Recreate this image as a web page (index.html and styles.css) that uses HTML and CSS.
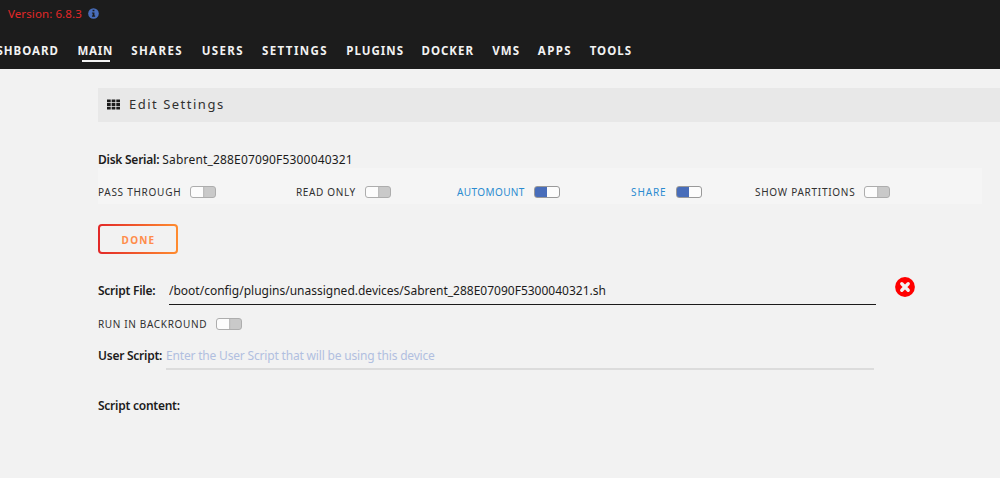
FILE: index.html
```html
<!DOCTYPE html>
<html lang="en">
<head>
    <meta charset="UTF-8">
    <meta name="viewport" content="width=device-width, initial-scale=1.0">
    <title>Edit Settings</title>
    <link rel="stylesheet" href="styles.css">
</head>
<body>
    <header>
        <div class="version">
            <span>Version: 6.8.3</span>
            <svg class="info" viewBox="0 0 12 12">
                <circle cx="6" cy="6" r="5.8" fill="#486dba"/>
                <path d="M5 2h2v1.6H5zM4.3 4.8H7v3.4h.8v1.3H4.3V8.2h.8V6h-.8z" fill="#1c1c1c"/>
            </svg>
        </div>
        <nav>
            <a href="#">DASHBOARD</a>
            <a class="active" href="#">MAIN</a>
            <a class="wide" href="#">SHARES</a>
            <a class="wide" href="#">USERS</a>
            <a class="wide" href="#">SETTINGS</a>
            <a href="#">PLUGINS</a>
            <a href="#">DOCKER</a>
            <a href="#">VMS</a>
            <a class="wide" href="#">APPS</a>
            <a href="#">TOOLS</a>
        </nav>
    </header>

    <main>
        <div class="title">
            <svg class="grid-icon" viewBox="0 0 14 11">
                <path d="M0 0h4v3H0zM5 0h4v3H5zM10 0h4v3h-4zM0 4h4v3H0zM5 4h4v3H5zM10 4h4v3h-4zM0 8h4v3H0zM5 8h4v3H5zM10 8h4v3h-4z" fill="#1c1c1c"/>
            </svg>
            <span>Edit Settings</span>
        </div>

        <p class="serial"><b>Disk Serial:</b> <span>Sabrent_288E07090F5300040321</span></p>

        <!-- Device switches -->
        <div class="switches">
            <div class="option wide"><span>PASS THROUGH</span><i class="switch"></i></div>
            <div class="option"><span>READ ONLY</span><i class="switch"></i></div>
            <div class="option tight on"><span>AUTOMOUNT</span><i class="switch"></i></div>
            <div class="option wider on"><span>SHARE</span><i class="switch"></i></div>
            <div class="option wide"><span>SHOW PARTITIONS</span><i class="switch"></i></div>
        </div>

        <button class="done" type="button">DONE</button>

        <!-- Script form -->
        <div class="field file">
            <label for="scriptFile">Script File:</label>
            <input type="text" id="scriptFile" value="/boot/config/plugins/unassigned.devices/Sabrent_288E07090F5300040321.sh">
            <svg class="remove" viewBox="0 0 20 20">
                <circle cx="10" cy="10" r="9.9" fill="#f00"/>
                <path d="M6.8 6.8l6.4 6.4M13.2 6.8l-6.4 6.4" stroke="#f2f2f2" stroke-width="3.4" stroke-linecap="round"/>
            </svg>
        </div>

        <div class="option background"><span>RUN IN BACKROUND</span><i class="switch"></i></div>

        <div class="field user">
            <label for="userScript">User Script:</label>
            <input type="text" id="userScript" placeholder="Enter the User Script that will be using this device">
        </div>

        <p class="content">Script content:</p>
    </main>
</body>
</html>
```

FILE: styles.css
```css
* {
    box-sizing: border-box;
}

body {
    margin: 0;
    height: 478px;
    overflow: hidden;
    background-color: #f2f2f2;
    color: #1c1b1b;
    font-family: "Noto Sans", sans-serif;
    font-size: 12px;
}

header {
    height: 69px;
    background-color: #1c1c1c;
}

.version {
    display: flex;
    align-items: center;
    gap: 6px;
    height: 26px;
    padding-left: 8px;
    color: #e22828;
    font-size: 11.5px;
    letter-spacing: 0.1px;
}

.info {
    width: 11px;
    height: 11px;
}

nav {
    display: grid;
    grid-template-columns: 58px 54px 70px 61px 84px 76px 70px 46px 52px 60px;
    height: 43px;
}

nav a {
    position: relative;
    justify-self: end;
    height: 38px;
    line-height: 49px;
    color: #f2f2f2;
    font-size: 11.5px;
    font-weight: bold;
    letter-spacing: 1px;
    margin-right: -1px;
    text-decoration: none;
    white-space: nowrap;
}

nav .wide {
    letter-spacing: 1.4px;
}

nav .active {
    letter-spacing: 0.7px;
}

nav .active::after {
    content: "";
    position: absolute;
    left: 4px;
    right: 3px;
    bottom: 2px;
    height: 2px;
    background-color: #f2f2f2;
}

main {
    padding: 19px 0 0 98px;
}

.title {
    display: flex;
    align-items: center;
    gap: 9px;
    height: 34px;
    padding: 0 0 2px 9px;
    background-color: #e8e8e8;
    color: #303030;
    font-size: 13px;
    letter-spacing: 1.5px;
}

.grid-icon {
    width: 13px;
    height: 11px;
}

p {
    margin: 0;
}

b, label, .content {
    font-weight: 600;
    letter-spacing: -0.25px;
}

.serial {
    height: 46px;
    padding-top: 28px;
    line-height: 20px;
}

.serial span {
    letter-spacing: 0.17px;
}

.switches {
    display: grid;
    grid-template-columns: 198px 161px 174px 124px 1fr;
    align-items: center;
    width: 884px;
    height: 36px;
    padding-top: 12px;
    background-color: #f5f5f5;
}

.option {
    display: flex;
    align-items: center;
    gap: 9px;
    color: #303030;
    font-size: 10px;
    letter-spacing: 0.65px;
    white-space: nowrap;
}

.option.wide {
    letter-spacing: 0.73px;
}

.option.wider {
    letter-spacing: 0.9px;
}

.option.tight {
    letter-spacing: 0.4px;
}

.on {
    color: #2b8bd0;
}

.switch {
    width: 26px;
    height: 12px;
    border: 1px solid #adadad;
    border-radius: 3px;
    background: linear-gradient(to right, #fcfcfc 12px, #b9b9b9 12px, #c9c9c9 14px);
}

.on .switch {
    border-color: #999;
    background: linear-gradient(to right, #486dba 12px, #fcfcfc 12px);
}

.done {
    display: block;
    width: 80px;
    height: 30px;
    margin-top: 20px;
    padding: 2px 6px 0 7px;
    border: 2px solid transparent;
    border-radius: 4px;
    background: linear-gradient(#f2f2f2, #f2f2f2) padding-box, linear-gradient(to right, #e22828, #ff8c2f) border-box;
    color: #ff8c4a;
    font-family: "Noto Sans", sans-serif;
    font-size: 10px;
    font-weight: bold;
    letter-spacing: 1.2px;
}

.field {
    display: flex;
    align-items: center;
}

.field input {
    height: 30px;
    padding: 2px 0 0;
    border: none;
    border-bottom: 1px solid #1c1b1b;
    background: transparent;
    color: #1c1b1b;
    font-family: "Noto Sans", sans-serif;
    font-size: 12px;
    outline: none;
}

.file {
    height: 30px;
    margin-top: 21px;
}

.file label {
    width: 71px;
}

.file input {
    width: 707px;
}

.remove {
    width: 20px;
    height: 20px;
    margin: -7px 0 0 19px;
}

.background {
    height: 12px;
    margin-top: 13px;
}

.user {
    height: 30px;
    margin-top: 10px;
}

.user label {
    width: 68px;
}

.field.user input {
    width: 708px;
    border-bottom: 2px solid #dcdcdc;
}

.field input::placeholder {
    color: #b1bfe0;
    letter-spacing: -0.18px;
    opacity: 1;
}

.content {
    margin-top: 26px;
    line-height: 20px;
}
```
